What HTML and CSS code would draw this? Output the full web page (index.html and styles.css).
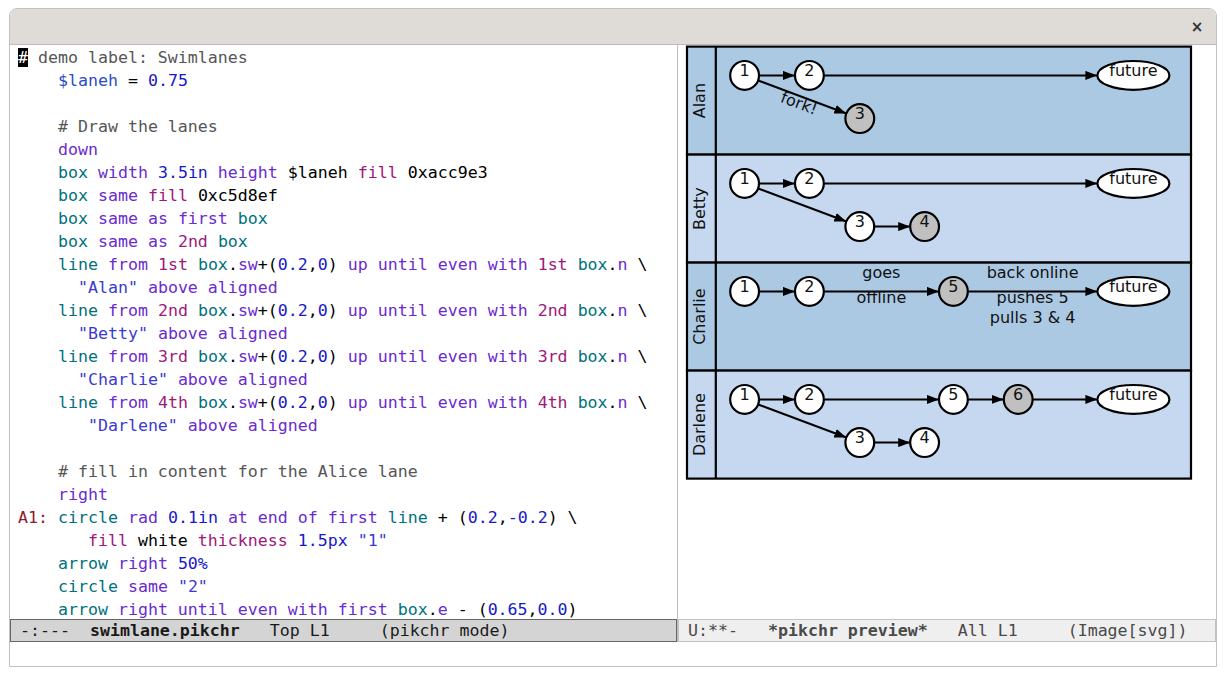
FILE: index.html
```html
<!DOCTYPE html>
<html>
<head>
    <title>swimlane.pikchr</title>
    <link rel="stylesheet" href="styles.css">
</head>
<body>
<div class="window">
    <div class="titlebar"><span class="close">×</span></div>
    <div class="panes">
        <div class="pane left">
            <div class="buffer code">
<div class="ln"><span class="cursor">#</span><span class="cm"> demo label: Swimlanes</span></div>
<div class="ln">    <span class="va">$laneh</span> = <span class="nu">0.75</span></div>
<div class="ln"> </div>
<div class="ln">    <span class="cm"># Draw the lanes</span></div>
<div class="ln">    <span class="kw">down</span></div>
<div class="ln">    <span class="ob">box</span> <span class="kw">width</span> <span class="nu">3.5in</span> <span class="kw">height</span> $laneh <span class="ma">fill</span> 0xacc9e3</div>
<div class="ln">    <span class="ob">box</span> <span class="kw">same</span> <span class="ma">fill</span> 0xc5d8ef</div>
<div class="ln">    <span class="ob">box</span> <span class="kw">same as first</span> <span class="ob">box</span></div>
<div class="ln">    <span class="ob">box</span> <span class="kw">same as</span> <span class="ma">2nd</span> <span class="ob">box</span></div>
<div class="ln">    <span class="ob">line</span> <span class="kw">from</span> <span class="ma">1st</span> <span class="ob">box</span>.<span class="kw">sw</span>+(<span class="nu">0.2</span>,<span class="nu">0</span>) <span class="kw">up until even with</span> <span class="ma">1st</span> <span class="ob">box</span>.<span class="kw">n</span> \</div>
<div class="ln">      <span class="st">"Alan"</span> <span class="kw">above aligned</span></div>
<div class="ln">    <span class="ob">line</span> <span class="kw">from</span> <span class="ma">2nd</span> <span class="ob">box</span>.<span class="kw">sw</span>+(<span class="nu">0.2</span>,<span class="nu">0</span>) <span class="kw">up until even with</span> <span class="ma">2nd</span> <span class="ob">box</span>.<span class="kw">n</span> \</div>
<div class="ln">      <span class="st">"Betty"</span> <span class="kw">above aligned</span></div>
<div class="ln">    <span class="ob">line</span> <span class="kw">from</span> <span class="ma">3rd</span> <span class="ob">box</span>.<span class="kw">sw</span>+(<span class="nu">0.2</span>,<span class="nu">0</span>) <span class="kw">up until even with</span> <span class="ma">3rd</span> <span class="ob">box</span>.<span class="kw">n</span> \</div>
<div class="ln">      <span class="st">"Charlie"</span> <span class="kw">above aligned</span></div>
<div class="ln">    <span class="ob">line</span> <span class="kw">from</span> <span class="ma">4th</span> <span class="ob">box</span>.<span class="kw">sw</span>+(<span class="nu">0.2</span>,<span class="nu">0</span>) <span class="kw">up until even with</span> <span class="ma">4th</span> <span class="ob">box</span>.<span class="kw">n</span> \</div>
<div class="ln">       <span class="st">"Darlene"</span> <span class="kw">above aligned</span></div>
<div class="ln"> </div>
<div class="ln">    <span class="cm"># fill in content for the Alice lane</span></div>
<div class="ln">    <span class="kw">right</span></div>
<div class="ln"><span class="lb">A1:</span> <span class="ob">circle</span> <span class="kw">rad</span> <span class="nu">0.1in</span> <span class="kw">at end of first</span> <span class="ob">line</span> + (<span class="nu">0.2</span>,<span class="nu">-0.2</span>) \</div>
<div class="ln">       <span class="ma">fill</span> white <span class="ma">thickness</span> <span class="nu">1.5px</span> <span class="st">"1"</span></div>
<div class="ln">    <span class="ob">arrow</span> <span class="kw">right</span> <span class="nu">50%</span></div>
<div class="ln">    <span class="ob">circle</span> <span class="kw">same</span> <span class="st">"2"</span></div>
<div class="ln">    <span class="ob">arrow</span> <span class="kw">right until even with first</span> <span class="ob">box</span>.<span class="kw">e</span> - (<span class="nu">0.65</span>,<span class="nu">0.0</span>)</div>
            </div>
            <div class="modeline active">-:---  <b>swimlane.pikchr</b>   Top L1     (pikchr mode)</div>
        </div>
        <div class="pane right">
            <div class="buffer">
                <svg class="diagram" width="538" height="574" viewBox="678 45 538 574">
                    <defs>
                        <marker id="ah" markerUnits="userSpaceOnUse" markerWidth="12" markerHeight="9" refX="12" refY="4.5" orient="auto" viewBox="0 0 12 9">
                            <path d="M0 0L12 4.5L0 9z"/>
                        </marker>
                    </defs>
                    <g transform="translate(687,46.6)">
                        <!-- Alan -->
                        <g>
                            <rect class="lane dark" x="0" y="0" width="504" height="108"/>
                            <line class="edge" x1="28.8" y1="108" x2="28.8" y2="0"/>
                            <text class="lbl" transform="translate(18,54) rotate(-90)">Alan</text>
                            <line class="arr" x1="72" y1="28.8" x2="108" y2="28.8"/>
                            <line class="arr" x1="136.8" y1="28.8" x2="410.4" y2="28.8"/>
                            <line class="arr" x1="71.08" y1="33.86" x2="159.32" y2="66.94"/>
                            <text class="lbl" transform="translate(112,57) rotate(20.56)" y="5">fork!</text>
                            <circle class="node" cx="57.6" cy="28.8" r="14.4"/><text class="num" x="57.6" y="29.3">1</text>
                            <circle class="node" cx="122.4" cy="28.8" r="14.4"/><text class="num" x="122.4" y="29.3">2</text>
                            <circle class="node gray" cx="172.8" cy="72" r="14.4"/><text class="num" x="172.8" y="72.5">3</text>
                            <ellipse class="node" cx="446.4" cy="28.8" rx="36" ry="14.4"/><text class="num" x="446.4" y="29.3">future</text>
                        </g>
                        <!-- Betty -->
                        <g transform="translate(0,108)">
                            <rect class="lane light" x="0" y="0" width="504" height="108"/>
                            <line class="edge" x1="28.8" y1="108" x2="28.8" y2="0"/>
                            <text class="lbl" transform="translate(18,54) rotate(-90)">Betty</text>
                            <line class="arr" x1="72" y1="28.8" x2="108" y2="28.8"/>
                            <line class="arr" x1="136.8" y1="28.8" x2="410.4" y2="28.8"/>
                            <line class="arr" x1="71.08" y1="33.86" x2="159.32" y2="66.94"/>
                            <line class="arr" x1="187.2" y1="72" x2="223.2" y2="72"/>
                            <circle class="node" cx="57.6" cy="28.8" r="14.4"/><text class="num" x="57.6" y="29.3">1</text>
                            <circle class="node" cx="122.4" cy="28.8" r="14.4"/><text class="num" x="122.4" y="29.3">2</text>
                            <circle class="node" cx="172.8" cy="72" r="14.4"/><text class="num" x="172.8" y="72.5">3</text>
                            <circle class="node gray" cx="237.6" cy="72" r="14.4"/><text class="num" x="237.6" y="72.5">4</text>
                            <ellipse class="node" cx="446.4" cy="28.8" rx="36" ry="14.4"/><text class="num" x="446.4" y="29.3">future</text>
                        </g>
                        <!-- Charlie -->
                        <g transform="translate(0,216)">
                            <rect class="lane dark" x="0" y="0" width="504" height="108"/>
                            <line class="edge" x1="28.8" y1="108" x2="28.8" y2="0"/>
                            <text class="lbl" transform="translate(18,54) rotate(-90)">Charlie</text>
                            <line class="arr" x1="72" y1="28.8" x2="108" y2="28.8"/>
                            <line class="arr" x1="136.8" y1="28.8" x2="252" y2="28.8"/>
                            <line class="arr" x1="280.8" y1="28.8" x2="410.4" y2="28.8"/>
                            <text class="num" x="194.4" y="15.7">goes</text>
                            <text class="num" x="194.4" y="40.1">offline</text>
                            <text class="num" x="345.6" y="15.7">back online</text>
                            <text class="num" x="345.6" y="40.1">pushes 5</text>
                            <text class="num" x="345.6" y="60.1">pulls 3 &amp; 4</text>
                            <circle class="node" cx="57.6" cy="28.8" r="14.4"/><text class="num" x="57.6" y="29.3">1</text>
                            <circle class="node" cx="122.4" cy="28.8" r="14.4"/><text class="num" x="122.4" y="29.3">2</text>
                            <circle class="node gray" cx="266.4" cy="28.8" r="14.4"/><text class="num" x="266.4" y="29.3">5</text>
                            <ellipse class="node" cx="446.4" cy="28.8" rx="36" ry="14.4"/><text class="num" x="446.4" y="29.3">future</text>
                        </g>
                        <!-- Darlene -->
                        <g transform="translate(0,324)">
                            <rect class="lane light" x="0" y="0" width="504" height="108"/>
                            <line class="edge" x1="28.8" y1="108" x2="28.8" y2="0"/>
                            <text class="lbl" transform="translate(18,54) rotate(-90)">Darlene</text>
                            <line class="arr" x1="72" y1="28.8" x2="108" y2="28.8"/>
                            <line class="arr" x1="136.8" y1="28.8" x2="252" y2="28.8"/>
                            <line class="arr" x1="280.8" y1="28.8" x2="316.8" y2="28.8"/>
                            <line class="arr" x1="345.6" y1="28.8" x2="410.4" y2="28.8"/>
                            <line class="arr" x1="71.08" y1="33.86" x2="159.32" y2="66.94"/>
                            <line class="arr" x1="187.2" y1="72" x2="223.2" y2="72"/>
                            <circle class="node" cx="57.6" cy="28.8" r="14.4"/><text class="num" x="57.6" y="29.3">1</text>
                            <circle class="node" cx="122.4" cy="28.8" r="14.4"/><text class="num" x="122.4" y="29.3">2</text>
                            <circle class="node" cx="266.4" cy="28.8" r="14.4"/><text class="num" x="266.4" y="29.3">5</text>
                            <circle class="node gray" cx="331.2" cy="28.8" r="14.4"/><text class="num" x="331.2" y="29.3">6</text>
                            <circle class="node" cx="172.8" cy="72" r="14.4"/><text class="num" x="172.8" y="72.5">3</text>
                            <circle class="node" cx="237.6" cy="72" r="14.4"/><text class="num" x="237.6" y="72.5">4</text>
                            <ellipse class="node" cx="446.4" cy="28.8" rx="36" ry="14.4"/><text class="num" x="446.4" y="29.3">future</text>
                        </g>
                    </g>
                </svg>
            </div>
            <div class="modeline">U:**-   <b>*pikchr preview*</b>   All L1     (Image[svg])</div>
        </div>
    </div>
    <div class="minibuf"></div>
</div>
</body>
</html>
```

FILE: styles.css
```css
body {
    margin: 0;
    background: #fff;
    font-family: "DejaVu Sans Mono", monospace;
}
.window {
    margin: 8px 0 0 9px;
    width: 1206px;
    height: 657px;
    border: 1px solid #c4c1bd;
    border-radius: 8px 8px 0 0;
    display: flex;
    flex-direction: column;
    overflow: hidden;
}
.titlebar {
    height: 35px;
    flex: none;
    background: #dfdcd8;
    border-bottom: 1px solid #bfbbb7;
    display: flex;
    justify-content: flex-end;
    align-items: center;
}
.close {
    width: 20px;
    margin-right: 9px;
    text-align: center;
    font-family: "DejaVu Sans", sans-serif;
    font-size: 15px;
    font-weight: bold;
    color: #2e3436;
}
.panes {
    display: flex;
    height: 597px;
    flex: none;
}
.pane {
    display: flex;
    flex-direction: column;
}
.pane.left {
    width: 667px;
    border-right: 1px solid #bdbdbd;
}
.pane.right {
    flex: 1;
}
.buffer {
    height: 574px;
    overflow: hidden;
}
.code {
    box-sizing: border-box;
    padding: 1px 0 0 8px;
    font-size: 16.6px;
    color: #000;
}
.ln {
    height: 23px;
    line-height: 23px;
    white-space: pre;
}
.cursor {
    background: #000;
    color: #fff;
}
.cm { color: #565656; }
.kw { color: #6a2bd0; }
.ob { color: #00717e; }
.ma { color: #a0177a; }
.nu { color: #1818c8; }
.st { color: #3a3ad2; }
.va { color: #2a4cc6; }
.lb { color: #8e1b2e; }
.modeline {
    height: 23px;
    box-sizing: border-box;
    border: 1px solid #c2c2c2;
    background: #efefef;
    color: #4a4a4a;
    font-size: 16.6px;
    line-height: 22px;
    padding-left: 9px;
    white-space: pre;
}
.modeline.active {
    border-color: #666;
    background: #d4d4d4;
    color: #1a1a1a;
}
.minibuf {
    flex: 1;
    background: #fff;
}
.diagram {
    display: block;
}
.lane {
    stroke: #000;
    stroke-width: 2.2;
}
.lane.dark { fill: #acc9e3; }
.lane.light { fill: #c5d8ef; }
.edge {
    stroke: #000;
    stroke-width: 2.2;
}
.arr {
    stroke: #000;
    stroke-width: 2;
    marker-end: url(#ah);
}
.node {
    fill: #fff;
    stroke: #000;
    stroke-width: 2.2;
}
.node.gray { fill: #c0c0c0; }
.num, .lbl {
    font-family: "DejaVu Sans", sans-serif;
    font-size: 16px;
    fill: #111;
    text-anchor: middle;
}
```
